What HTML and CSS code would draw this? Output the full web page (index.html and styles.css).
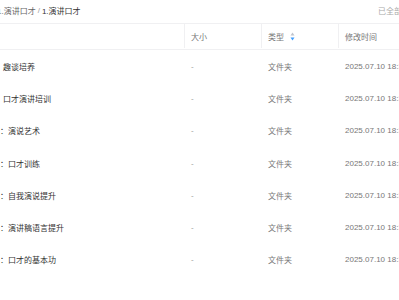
FILE: index.html
```html
<!DOCTYPE html>
<html lang="zh-CN">
<head>
<meta charset="utf-8">
<title>演讲口才</title>
<link rel="stylesheet" href="styles.css">
</head>
<body>
<div class="page">
  <div class="topbar">
    <div class="crumb"><span class="crumb-prev">1.演讲口才</span><span class="crumb-sep">/</span><span class="crumb-cur">1.演讲口才</span></div>
    <div class="status">已全部加载</div>
  </div>
  <div class="table">
    <div class="thead">
      <div class="th th-name"></div>
      <div class="th">大小</div>
      <div class="th">类型<span class="sort"><svg width="5" height="9" viewBox="0 0 5 9"><path d="M2.5 0.5 L4.5 3.5 L0.5 3.5 Z" fill="#c0c4cc"/><path d="M0.5 5.5 L4.5 5.5 L2.5 8.5 Z" fill="#409eff"/></svg></span></div>
      <div class="th">修改时间</div>
    </div>
    <div class="tr"><div class="td name">趣谈培养</div><div class="td muted">-</div><div class="td">文件夹</div><div class="td">2025.07.10 18:30</div></div>
    <div class="tr"><div class="td name">口才演讲培训</div><div class="td muted">-</div><div class="td">文件夹</div><div class="td">2025.07.10 18:30</div></div>
    <div class="tr"><div class="td name colon">：演说艺术</div><div class="td muted">-</div><div class="td">文件夹</div><div class="td">2025.07.10 18:30</div></div>
    <div class="tr"><div class="td name colon">：口才训练</div><div class="td muted">-</div><div class="td">文件夹</div><div class="td">2025.07.10 18:30</div></div>
    <div class="tr"><div class="td name colon">：自我演说提升</div><div class="td muted">-</div><div class="td">文件夹</div><div class="td">2025.07.10 18:30</div></div>
    <div class="tr"><div class="td name colon">：演讲稿语言提升</div><div class="td muted">-</div><div class="td">文件夹</div><div class="td">2025.07.10 18:30</div></div>
    <div class="tr"><div class="td name colon">：口才的基本功</div><div class="td muted">-</div><div class="td">文件夹</div><div class="td">2025.07.10 18:30</div></div>
  </div>
</div>
</body>
</html>
```
FILE: styles.css
```css
html, body {
  margin: 0;
  padding: 0;
  background: #fff;
  overflow: hidden;
}
body {
  font-family: "Liberation Sans", "Noto Sans CJK SC", sans-serif;
  font-size: 8px;
  color: #666;
  width: 399px;
  height: 300px;
}
.page {
  width: 399px;
  overflow: hidden;
}
.topbar {
  height: 23px;
  box-sizing: border-box;
  padding-bottom: 3px;
  display: flex;
  align-items: center;
  justify-content: space-between;
  white-space: nowrap;
}
.crumb {
  margin-left: -3px;
  display: flex;
  align-items: center;
}
.crumb-prev { color: #666; }
.crumb-sep { color: #999; margin: 0 2px; }
.crumb-cur { color: #333; }
.status {
  color: #aaa;
  margin-right: -22px;
  flex: none;
  width: 43px;
}
.table { width: 460px; }
.thead, .tr {
  display: grid;
  grid-template-columns: 184px 77px 77px 1fr;
}
.thead {
  border-top: 1px solid #f0f0f2;
  border-bottom: 1px solid #f0f0f2;
  box-sizing: border-box;
  height: 27px;
  padding-bottom: 1px;
}
.th {
  display: flex;
  align-items: center;
  padding-left: 6px;
  color: #777;
  border-left: 1px solid #f0f0f2;
}
.th-name { border-left: none; }
.sort {
  display: inline-flex;
  margin-left: 6px;
}
.tr { height: 32.3px; }
.td {
  display: flex;
  align-items: center;
  padding-left: 7px;
  white-space: nowrap;
  color: #777;
}
.td.name {
  color: #333;
  padding-left: 3px;
}
.td.name.colon { padding-left: 0; }
.td.muted { color: #999; }
```
